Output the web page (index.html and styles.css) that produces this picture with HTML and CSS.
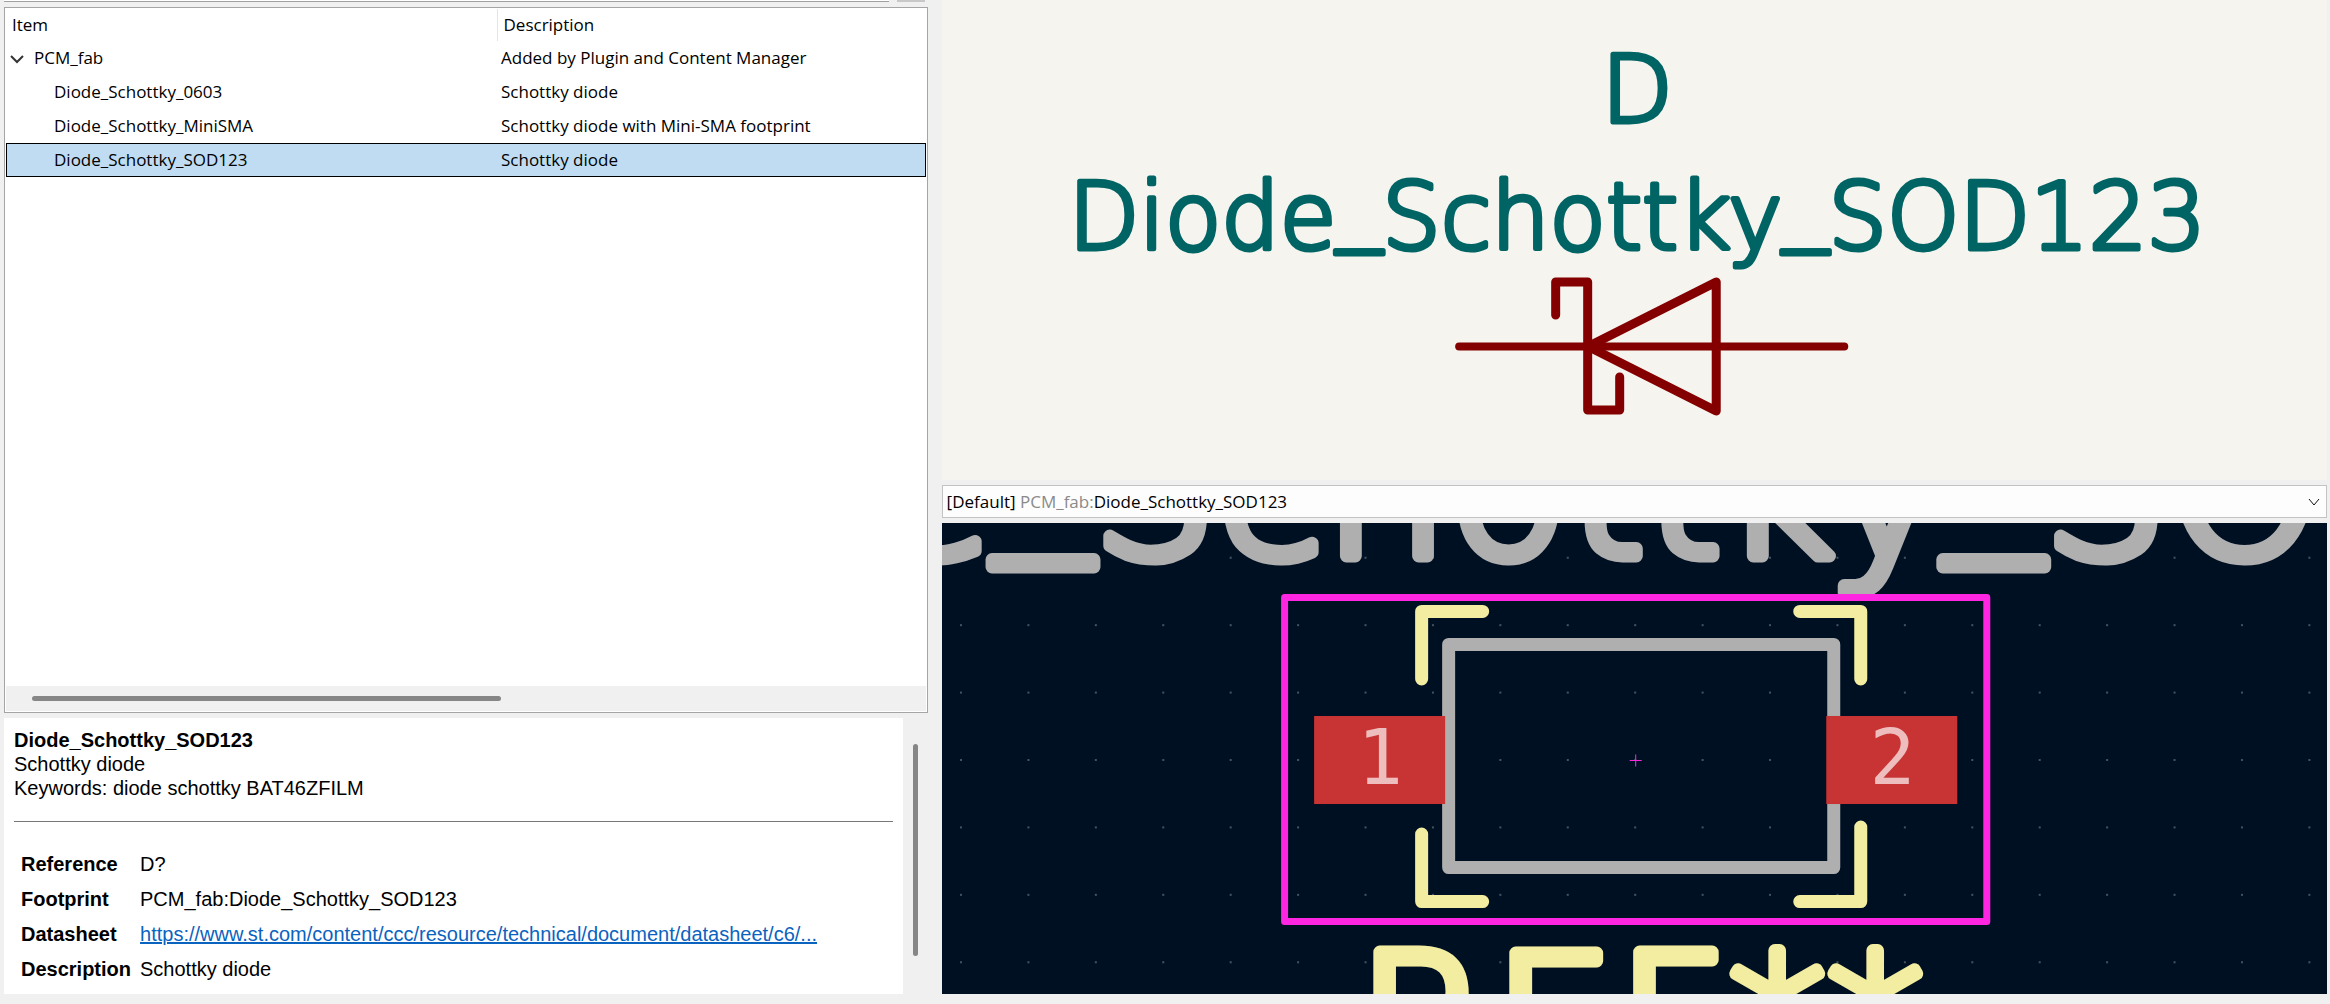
FILE: index.html
```
<!DOCTYPE html>
<html lang="en">
<head>
	<title>Choose Symbol</title>
	<meta charset="UTF-8">
	<link rel="stylesheet" href="styles.css">
</head>
<body>

<div class="chooser">
	<div class="left">
		<div class="search"><div class="search-box"></div><div class="search-button"></div></div>

		<div class="tree">
			<table>
				<thead>
					<tr><th class="item">Item</th><th>Description</th></tr>
				</thead>
				<tbody>
					<tr class="library">
						<td><svg class="chevron" viewBox="0 0 14 14"><path d="M1 4l6 6 6-6"/></svg>PCM_fab</td>
						<td>Added by Plugin and Content Manager</td>
					</tr>
					<tr><td>Diode_Schottky_0603</td><td>Schottky diode</td></tr>
					<tr><td>Diode_Schottky_MiniSMA</td><td>Schottky diode with Mini-SMA footprint</td></tr>
					<tr class="selected"><td>Diode_Schottky_SOD123</td><td>Schottky diode</td></tr>
				</tbody>
			</table>
			<div class="hscroll"><div class="thumb"></div></div>
		</div>

		<div class="details">
			<div class="info">
				<b>Diode_Schottky_SOD123</b>
				<p>Schottky diode</p>
				<p>Keywords: diode schottky BAT46ZFILM</p>
				<hr>
				<table>
					<tr><th>Reference</th><td>D?</td></tr>
					<tr><th>Footprint</th><td>PCM_fab:Diode_Schottky_SOD123</td></tr>
					<tr><th>Datasheet</th><td><a href="#datasheet">https://www.st.com/content/ccc/resource/technical/document/datasheet/c6/...</a></td></tr>
					<tr><th>Description</th><td>Schottky diode</td></tr>
				</table>
			</div>
			<div class="vscroll"><div class="thumb"></div></div>
		</div>
	</div>

	<div class="right">
		<svg class="symbol" viewBox="942 0 1385 480" preserveAspectRatio="xMidYMid slice">
			<text class="field" x="1637" y="122">D</text>
			<text class="field" x="1637" y="249">Diode<tspan class="low">_</tspan>Schottky<tspan class="low">_</tspan>SOD123</text>
			<g class="body">
				<path d="M1588 346.5L1716 282V411Z"/>
				<path d="M1555.5 315V282H1587.5V410H1619.5V377"/>
				<path class="pin" d="M1459 346.5H1844"/>
			</g>
		</svg>

		<div class="footprint-choice">
			<label for="footprint">[Default] <span>PCM_fab:</span>Diode_Schottky_SOD123</label>
			<select id="footprint">
				<option value="PCM_fab:Diode_Schottky_SOD123"></option>
			</select>
			<svg class="chevron" viewBox="0 0 14 14"><path d="M2 4l5 6 5-6"/></svg>
		</div>

		<svg class="footprint" viewBox="942 523 1385 471" preserveAspectRatio="xMidYMid slice">
			<defs>
				<pattern id="grid" x="1601.3" y="726.3" width="67.4" height="67.4" patternUnits="userSpaceOnUse">
					<rect x="33" y="33" width="1.4" height="1.4" fill="#8c959c"/>
				</pattern>
			</defs>
			<rect x="942" y="523" width="1385" height="471" fill="url(#grid)"/>
			<text class="fab-text" x="1635" y="556">Diode<tspan class="low">_</tspan>Schottky<tspan class="low">_</tspan>SOD123</text>
			<rect class="fab" x="1448.5" y="644.5" width="385" height="223"/>
			<rect class="courtyard" x="1284.5" y="597.5" width="702" height="324"/>
			<g class="silk">
				<path d="M1482.5 611.5H1421.5V679"/>
				<path d="M1799.5 611.5H1860.5V679"/>
				<path d="M1482.5 901.5H1421.5V834"/>
				<path d="M1799.5 901.5H1860.5V827"/>
			</g>
			<text class="silk-text" x="1640" y="1096">REF**</text>
			<g class="pad">
				<rect x="1314" y="716" width="131" height="88"/>
				<rect x="1826" y="716" width="131" height="88"/>
				<text x="1380" y="784">1</text>
				<text x="1892" y="784">2</text>
			</g>
			<path class="origin" d="M1629.5 760.5h12M1635.5 754.5v12"/>
		</svg>
	</div>
</div>

</body>
</html>
```
FILE: styles.css
```
* { box-sizing:border-box; }
body
{
	margin:0;
	background:#f0f0f0;
	color:#000;
	font:17px/24px "Open Sans", "Noto Sans", sans-serif;
}
table { border-collapse:collapse; }
th { text-align:left; }
p { margin:0; }
.chooser
{
	display:grid;
	grid-template-columns:2fr 3fr;
	gap:14px;
	min-height:100vh;
	padding:0 3px 10px 4px;
}
.left, .right
{
	display:flex;
	flex-direction:column;
	min-width:0;
}

/* symbol tree */
.search
{
	display:flex;
	gap:8px;
	height:2px;
	margin-bottom:5px;
	padding-right:3px;
}
.search-box
{
	flex:1;
	background:#fff;
	border-bottom:1px solid #a0a0a0;
}
.search-button
{
	width:28px;
	background:#c8c8c8;
}
.tree
{
	display:flex;
	flex-direction:column;
	flex:1;
	margin-bottom:5px;
	padding:1px;
	background:#fff;
	border:1px solid #a5a5a5;
}
.tree table
{
	width:100%;
	table-layout:fixed;
}
.tree th
{
	height:32px;
	padding:0 6px;
	font-weight:normal;
}
.tree th.item
{
	width:491px;
	border-right:1px solid #e5e5e5;
}
.tree td
{
	height:34px;
	padding:0 4px;
	white-space:nowrap;
}
.tree td:first-child { padding-left:48px; }
.tree .library td:first-child { padding-left:4px; }
.selected { background:#bfdcf2; outline:1px solid #000; outline-offset:-1px; }
.chevron
{
	width:14px;
	height:14px;
	fill:none;
	stroke:#333;
	stroke-width:2;
}
.library .chevron
{
	margin-right:10px;
	vertical-align:middle;
}
.thumb
{
	background:#868686;
	border-radius:3px;
}
.hscroll
{
	margin-top:auto;
	padding:10px 26px;
	background:#f0f0f0;
}
.hscroll .thumb
{
	width:54%;
	height:5px;
}

/* selected symbol details */
.details
{
	display:flex;
	font:20px/24px "Liberation Sans", Arial, sans-serif;
}
.info
{
	flex:1;
	padding:10px 10px 8px;
	background:#fff;
}
hr
{
	margin:21px 0 24px;
	border:0;
	border-top:1px solid #777;
}
.info th, .info td
{
	height:35px;
	padding:0 2px 0 7px;
}
a { color:#0b63c0; }
.vscroll
{
	width:25px;
	padding:26px 10px 38px;
}
.vscroll .thumb { height:100%; }

/* previews */
.symbol
{
	display:block;
	flex:480 0 0;
	min-height:0;
	width:100%;
	background:#f5f4ef;
}
.field, .fab-text, .silk-text
{
	font-family:"DejaVu Sans Light", "DejaVu Sans", sans-serif;
	font-weight:200;
	text-anchor:middle;
	stroke-linejoin:round;
}
/* underscores sit just under the baseline */
.low { baseline-shift:18%; }
.field
{
	font-size:92px;
	fill:#006464;
	stroke:#006464;
	stroke-width:5px;
}
.body
{
	fill:none;
	stroke:#840000;
	stroke-width:9px;
	stroke-linecap:round;
	stroke-linejoin:round;
}
.pin { stroke-width:8px; }
.footprint-choice
{
	position:relative;
	height:33px;
	margin:5px 0;
}
.footprint-choice select
{
	display:block;
	width:100%;
	height:33px;
	appearance:none;
	border:1px solid #c3c3c3;
	background:#fdfdfd;
	font:inherit;
}
/* the label is the shown value, drawn over the box */
.footprint-choice label
{
	position:absolute;
	top:5px;
	left:5px;
	pointer-events:none;
}
.footprint-choice span { color:#8a8a8a; }
.footprint-choice .chevron
{
	position:absolute;
	top:10px;
	right:6px;
	stroke:#111;
	stroke-width:1;
	pointer-events:none;
}
.footprint
{
	display:block;
	flex:471 0 0;
	min-height:0;
	width:100%;
	background:#001023;
}
.fab-text, .silk-text
{
	font-size:196px;
	stroke-width:13px;
}
.fab-text { fill:#afafaf; stroke:#afafaf; }
.silk-text { fill:#f2eda1; stroke:#f2eda1; }
.fab, .silk, .courtyard
{
	fill:none;
	stroke-width:13px;
	stroke-linecap:round;
	stroke-linejoin:round;
}
.fab { stroke:#afafaf; }
.silk { stroke:#f2eda1; }
.courtyard { stroke:#ff26e2; stroke-width:7px; }
.pad { fill:#c83434; }
.pad text
{
	fill:#eebebe;
	font-family:"DejaVu Sans Mono", monospace;
	font-size:76px;
	text-anchor:middle;
}
.origin { stroke:#ff26e2; }
```
